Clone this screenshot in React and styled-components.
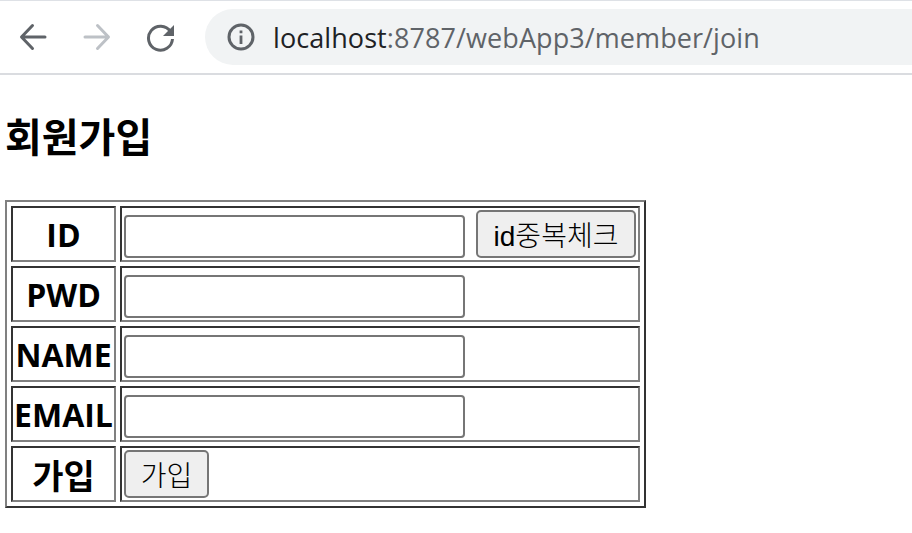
import styled, { createGlobalStyle } from "styled-components";

const GlobalStyle = createGlobalStyle`
  html, body {
    margin: 0;
    padding: 0;
    background: #fff;
  }
  body {
    font-family: "Open Sans", "Noto Sans CJK KR", sans-serif;
    color: #000;
  }
`;

const BrowserBar = styled.header`
  height: 72px;
  box-sizing: content-box;
  border-top: 1px solid #dee1e6;
  border-bottom: 2px solid #dadce0;
  display: flex;
  align-items: center;
  padding-left: 17px;
`;

const NavButton = styled.button`
  width: 32px;
  height: 32px;
  margin-right: 32px;
  padding: 0;
  border: 0;
  background: none;
  display: flex;
  align-items: center;
  justify-content: center;
  color: ${(p) => (p.$disabled ? "#bdc1c6" : "#5f6368")};
`;

const AddressPill = styled.div`
  flex: 1;
  height: 56px;
  margin-left: -4px;
  background: #f1f3f4;
  border-radius: 28px 0 0 28px;
  display: flex;
  align-items: center;
  padding-left: 22px;
  gap: 18px;
  color: #5f6368;
`;

const UrlText = styled.span`
  font-family: "Open Sans", sans-serif;
  font-size: 27px;
  white-space: nowrap;
  letter-spacing: 0.08px;
  color: #5f6368;
`;

const UrlHost = styled.span`
  color: #202124;
`;

const Page = styled.main`
  padding-left: 5px;
`;

const Title = styled.h3`
  margin: 34px 0 39px;
  font-family: "Noto Sans CJK KR", sans-serif;
  font-size: 40px;
  line-height: 52px;
  font-weight: 700;
`;

const JoinTable = styled.table`
  border-collapse: separate;
  border-spacing: 4px;
  border: 2px solid;
  border-color: #808080 #333 #333 #808080;
`;

const HeadCell = styled.th`
  width: 101px;
  padding: 0;
  border: 2px solid;
  border-color: #333 #808080 #808080 #333;
  font-size: ${(p) => (p.$hangul ? 34 : 32)}px;
  font-weight: 700;
  text-align: center;
  white-space: nowrap;
`;

const FieldCell = styled.td`
  width: 512px;
  padding: 2px;
  border: 2px solid;
  border-color: #333 #808080 #808080 #333;
`;

const FieldRow = styled.div`
  height: 48px;
  display: flex;
  align-items: flex-end;
  justify-content: space-between;
`;

const TextInput = styled.input`
  width: 341px;
  height: 43px;
  box-sizing: border-box;
  margin: 0;
  padding: 2px 4px;
  background: #fff;
  border: 2px solid #767676;
  border-radius: 4px;
`;

const FormButton = styled.button`
  width: ${(p) => p.$width}px;
  height: 48px;
  box-sizing: border-box;
  margin: 0;
  padding: 0;
  background: #efefef;
  border: 2px solid #767676;
  border-radius: 5px;
  font-family: "Liberation Sans", "Noto Sans CJK KR", sans-serif;
  font-size: 28px;
  font-weight: 300;
  color: #000;
`;

const BackIcon = ({ flip }) => (
  <svg
    width="28"
    height="28"
    viewBox="0 0 28 28"
    fill="none"
    stroke="currentColor"
    strokeWidth="3"
    strokeLinecap="round"
    strokeLinejoin="round"
    style={flip ? { transform: "scaleX(-1)" } : undefined}
  >
    <path d="M26 14H3M13.5 2.5L2.5 14l11 11.5" />
  </svg>
);

const ReloadIcon = () => (
  <svg width="30" height="30" viewBox="0 0 30 30" fill="none">
    <path
      d="M24.5 9.5A12 12 0 1 0 26.5 17"
      stroke="currentColor"
      strokeWidth="3"
    />
    <path d="M28 3v11H17z" fill="currentColor" />
  </svg>
);

const InfoIcon = () => (
  <svg width="28" height="28" viewBox="0 0 28 28" fill="none">
    <circle cx="14" cy="14" r="12" stroke="currentColor" strokeWidth="3" />
    <path d="M12.6 12.5h2.8V21h-2.8zM12.6 7.5h2.8v2.8h-2.8z" fill="currentColor" />
  </svg>
);

const fields = ["PWD", "NAME", "EMAIL"];

export default function App() {
  return (
    <>
      <GlobalStyle />
      <BrowserBar>
        <NavButton>
          <BackIcon />
        </NavButton>
        <NavButton $disabled>
          <BackIcon flip />
        </NavButton>
        <NavButton>
          <ReloadIcon />
        </NavButton>
        <AddressPill>
          <InfoIcon />
          <UrlText>
            <UrlHost>localhost</UrlHost>:8787/webApp3/member/join
          </UrlText>
        </AddressPill>
      </BrowserBar>
      <Page>
        <Title>회원가입</Title>
        <JoinTable>
          <tbody>
            <tr>
              <HeadCell>ID</HeadCell>
              <FieldCell>
                <FieldRow>
                  <TextInput type="text" />
                  <FormButton $width={160}>id중복체크</FormButton>
                </FieldRow>
              </FieldCell>
            </tr>
            {fields.map((name) => (
              <tr key={name}>
                <HeadCell>{name}</HeadCell>
                <FieldCell>
                  <FieldRow>
                    <TextInput type="text" />
                  </FieldRow>
                </FieldCell>
              </tr>
            ))}
            <tr>
              <HeadCell $hangul>가입</HeadCell>
              <FieldCell>
                <FieldRow>
                  <FormButton $width={85}>가입</FormButton>
                </FieldRow>
              </FieldCell>
            </tr>
          </tbody>
        </JoinTable>
      </Page>
    </>
  );
}
